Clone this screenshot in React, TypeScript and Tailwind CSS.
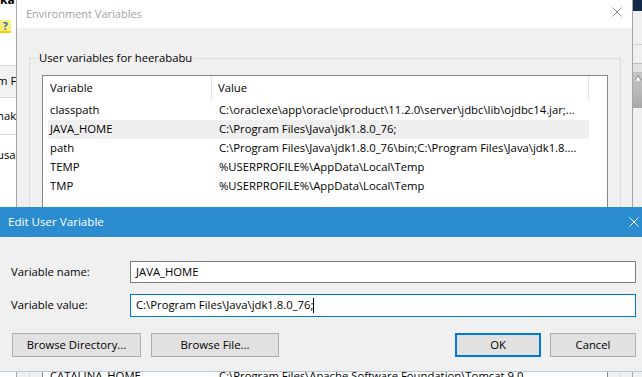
import React from 'react';

const font = { fontFamily: '"Open Sans", "Noto Sans", sans-serif' };

interface EnvVar {
  name: string;
  value: string;
}

const userVars: EnvVar[] = [
  { name: 'classpath', value: 'C:\\oraclexe\\app\\oracle\\product\\11.2.0\\server\\jdbc\\lib\\ojdbc14.jar;...' },
  { name: 'JAVA_HOME', value: 'C:\\Program Files\\Java\\jdk1.8.0_76;' },
  { name: 'path', value: 'C:\\Program Files\\Java\\jdk1.8.0_76\\bin;C:\\Program Files\\Java\\jdk1.8....' },
  { name: 'TEMP', value: '%USERPROFILE%\\AppData\\Local\\Temp' },
  { name: 'TMP', value: '%USERPROFILE%\\AppData\\Local\\Temp' },
];

const CloseIcon = ({ className }: { className: string }) => (
  <svg viewBox="0 0 10 10" className={className} fill="none" stroke="currentColor" strokeWidth="1">
    <path d="M0.5 0.5 L9.5 9.5 M9.5 0.5 L0.5 9.5" />
  </svg>
);

// bits of the app window sitting behind, left side
const LeftStrip = () => (
  <div className="w-[16px] shrink-0 bg-white flex flex-col text-[11.3px] text-black overflow-clip whitespace-nowrap">
    <div className="h-[6px] overflow-clip">
      <div className="font-bold text-[12px] leading-[12px] -mt-[6px] ml-[0px]">ka</div>
    </div>
    <div className="h-[14px]" />
    <div className="h-[11px] w-[11px] bg-[#f7ef7a] flex items-center justify-center text-[10px] font-bold text-[#2f5fb0] leading-none">?</div>
    <div className="w-[11px] h-[2px] bg-[#e9d400]" />
    <div className="h-[32px]" />
    <div className="h-[33px] bg-[#f2f2f2] border-t border-b border-[#d9d9d9] flex items-center -ml-[3px]">m F</div>
    <div className="h-[37px] flex items-center -ml-[3px] border-b border-[#d9d9d9]">nake</div>
    <div className="h-[40px] flex items-center -ml-[3px]">usa</div>
  </div>
);

// bits of the app window sitting behind, right side
const RightStrip = () => (
  <div className="w-[9px] shrink-0 bg-[#f0f0f0] flex flex-col">
    <div className="h-[11px] bg-[#13294b]" />
    <div className="h-[34px] border-b border-[#cfcfcf]" />
    <div className="h-[18px]" />
    <div className="h-[10px] bg-[#e2e2e2] border-y border-[#bdbdbd]" />
    <div className="h-[35px] bg-gradient-to-b from-[#c8c8c8] to-[#a9a9a9] flex justify-start">
      <svg viewBox="0 0 9 8" className="w-[9px] h-[8px] mt-[1px] ml-[1px]" fill="#f5f5f5" stroke="#6b6b6b" strokeWidth="0.8">
        <path d="M1 7 L4.5 1 L8 7" />
      </svg>
    </div>
  </div>
);

const EnvWindow = () => (
  <div className="w-[617px] shrink-0 border-l border-r border-[#a6a6a6] flex flex-col h-[377px] overflow-clip">
    <div className="h-[28px] shrink-0 bg-white flex items-center justify-between pl-[9px] pr-[10px]">
      <span className="text-[11px] text-[#a3a3a3]">Environment Variables</span>
      <CloseIcon className="w-[10px] h-[10px] text-[#8a8a8a] mb-[4px]" />
    </div>
    <div className="flex-1 bg-[#f0f0f0] pl-[12px] pr-[11px] pt-[22px]">
      <fieldset className="border border-[#dcdcdc] px-[12px] pb-0 h-[400px]">
        <legend className="text-[11.3px] text-black px-[1px] ml-[-4px] leading-[16px]">User variables for heerababu</legend>
        <div className="mt-[9px] bg-white border border-[#828790] h-[400px] flex flex-col text-[11.3px] text-black">
          <div className="h-[24px] flex items-center shrink-0">
            <div className="w-[169px] h-full pl-[7px] flex items-center border-r border-[#e5e5e5]">Variable</div>
            <div className="w-[377px] h-full pl-[6px] flex items-center border-r border-[#e5e5e5]">Value</div>
          </div>
          <div className="flex flex-col pl-[5px] pr-[18px] pt-[1px]">
            {userVars.map((v) => (
              <div
                key={v.name}
                className={`h-[19px] flex items-center whitespace-nowrap ${v.name === 'JAVA_HOME' ? 'bg-[#efefef]' : ''}`}
              >
                <span className="w-[171px] pl-[2px]">{v.name}</span>
                <span>{v.value}</span>
              </div>
            ))}
            <div className="h-[171px]" />
            <div className="h-[19px] flex items-center whitespace-nowrap">
              <span className="w-[171px] pl-[2px]">CATALINA_HOME</span>
              <span>C:\Program Files\Apache Software Foundation\Tomcat 9.0</span>
            </div>
          </div>
        </div>
      </fieldset>
    </div>
  </div>
);

const WinButton = ({ label, width, focused }: { label: string; width: string; focused?: boolean }) => (
  <button
    className={`${width} h-[24px] bg-[#e1e1e1] text-[11.3px] text-black flex items-center justify-center ${
      focused ? 'border-2 border-[#0078d7]' : 'border border-[#adadad]'
    }`}
  >
    {label}
  </button>
);

const EditDialog = () => (
  <div className="absolute left-0 top-[207px] w-[642px] h-[165px] bg-[#f0f0f0] border-b border-[#b9c9d9] flex flex-col text-[11.3px] text-black">
    <div className="h-[30px] bg-[#2b8dcf] flex items-center justify-between pl-[8px] pr-[3px] shrink-0">
      <span className="text-white text-[11.6px]">Edit User Variable</span>
      <CloseIcon className="w-[10px] h-[10px] text-white" />
    </div>
    <div className="pt-[24px] pl-[11px] pr-[6px] flex flex-col">
      <div className="flex items-center h-[22px]">
        <span className="w-[119px]">Variable name:</span>
        <div className="flex-1 h-[22px] bg-white border border-[#7a7a7a] flex items-center pl-[5px]">JAVA_HOME</div>
      </div>
      <div className="flex items-center h-[23px] mt-[11px]">
        <span className="w-[119px]">Variable value:</span>
        <div className="flex-1 h-[23px] bg-white border border-[#0078d7] flex items-center pl-[5px]">
          C:\Program Files\Java\jdk1.8.0_76;
          <span className="w-[1px] h-[15px] bg-black" />
        </div>
      </div>
      <div className="flex items-center mt-[16px] pl-[1px]">
        <WinButton label="Browse Directory..." width="w-[129px]" />
        <div className="w-[10px]" />
        <WinButton label="Browse File..." width="w-[128px]" />
        <div className="flex-1" />
        <WinButton label="OK" width="w-[86px]" focused />
        <div className="w-[9px]" />
        <WinButton label="Cancel" width="w-[86px]" />
      </div>
    </div>
  </div>
);

export default function App() {
  return (
    <div className="relative w-[642px] h-[377px] overflow-clip bg-white" style={font}>
      <div className="flex">
        <LeftStrip />
        <EnvWindow />
        <RightStrip />
      </div>
      <EditDialog />
    </div>
  );
}
